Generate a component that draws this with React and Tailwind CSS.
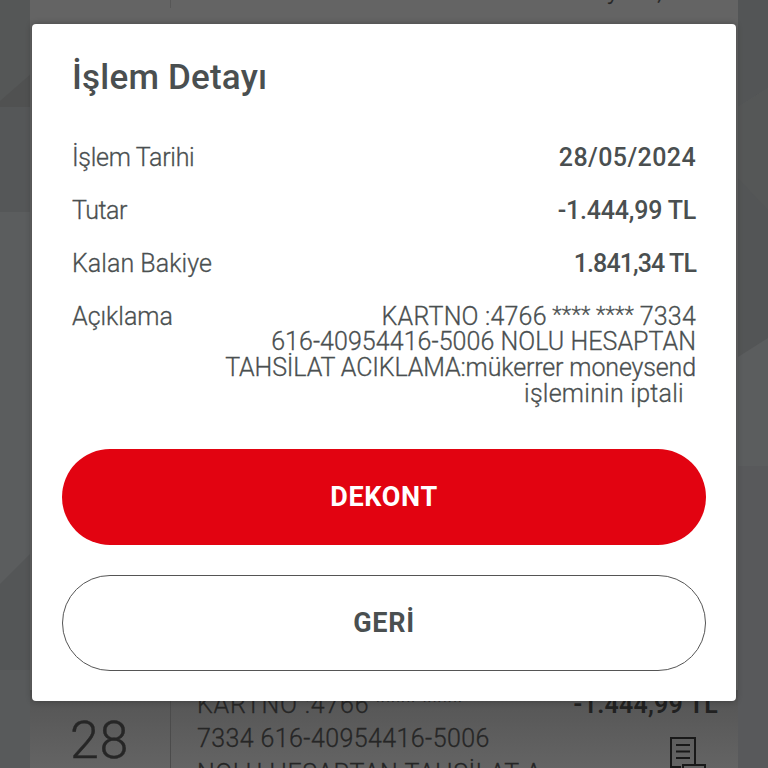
import { clsx } from "clsx";

const details = [
  {
    label: "İşlem Tarihi",
    value: "28/05/2024",
    labelSpacing: "tracking-[-0.3px]",
    valueSpacing: "tracking-[0.4px]",
  },
  {
    label: "Tutar",
    value: "-1.444,99 TL",
    labelSpacing: "tracking-[-0.5px]",
    valueSpacing: "tracking-[-0.2px]",
  },
  {
    label: "Kalan Bakiye",
    value: "1.841,34 TL",
    labelSpacing: "tracking-[0.05px]",
    valueSpacing: "tracking-[-0.9px]",
  },
];

const Backdrop = () => {
  return (
    <svg
      className="absolute inset-0 h-full w-full"
      viewBox="0 0 768 768"
      preserveAspectRatio="none"
      aria-hidden="true"
    >
      <rect width="768" height="768" fill="#5b5d5e" />
      <path d="M0 0H40V107H0Z" fill="#555757" />
      <path d="M0 101L40 66V107H0Z" fill="#505151" />
      <path d="M0 107H40V212H0Z" fill="#555758" />
      <path d="M0 584L40 544V768H0Z" fill="#545657" />
      <path d="M0 670H40V768H0Z" fill="#585a5b" />
      <path d="M730 0H768V88L730 112Z" fill="#535556" />
      <path d="M730 112L768 88V250H730Z" fill="#555757" />
      <path d="M730 170L768 210V338L730 362Z" fill="#535556" />
      <path d="M730 466H768V768H730Z" fill="#58595b" />
    </svg>
  );
};

const ReceiptIcon = () => {
  return (
    <svg
      className="h-[42px] w-[40px]"
      viewBox="0 0 40 42"
      fill="none"
      stroke="#191919"
      strokeWidth="2"
      aria-hidden="true"
    >
      <path d="M13 31H3V2H27V28" />
      <path d="M8 9H22M8 15.500H22M8 22H22" />
      <path d="M15 40V29H37V40" />
    </svg>
  );
};

const Transactions = () => {
  return (
    <div className="relative mx-[30px] flex h-[768px] flex-col justify-between overflow-hidden bg-[#646464] text-[#262626]">
      <div className="flex h-[22px]">
        <div className="h-2 w-[141px] border-r border-[#575757]" />
        <div className="-mt-[23px] ml-[436px] text-[25px] leading-7 font-light tracking-[1.5px] whitespace-nowrap [-webkit-text-stroke:0.3px]">
          yeni,
        </div>
      </div>
      <div className="flex h-[78px] bg-linear-to-b from-[#545454] to-[#646464]">
        <div className="w-[141px] border-r border-[#4b4b4b] pt-[26px] pl-[40px] text-[52px] leading-[50px] font-light tracking-[0.7px] [-webkit-text-stroke:0.4px]">
          28
        </div>
        <div className="w-[375px] pl-[26px] text-[25px] leading-[34px] font-light whitespace-nowrap [-webkit-text-stroke:0.3px]">
          <div className="-mt-[2px] tracking-[0.8px]">
            KARTNO :4766
            <span className="align-[4px] text-[22px] leading-none">
              {" "}
              **** ****
            </span>
          </div>
          <div className="tracking-[0.4px]">7334 616-40954416-5006</div>
          <div className="mt-px tracking-[0.5px]">NOLU HESAPTAN TAHSİLAT A</div>
        </div>
        <div className="flex flex-1 flex-col items-end pr-[20px]">
          <div className="-mt-[2px] text-[25px] leading-[34px] font-semibold tracking-[0.2px] whitespace-nowrap text-[#212121]">
            -1.444,99 TL
          </div>
          <div className="mt-[14px] mr-[10px]">
            <ReceiptIcon />
          </div>
        </div>
      </div>
    </div>
  );
};

const DetailRow = ({ label, value, labelSpacing, valueSpacing }) => {
  return (
    <div className="flex h-[53.400px] items-start justify-between text-[25px] leading-[30px]">
      <dt
        className={clsx("font-light [-webkit-text-stroke:0.3px]", labelSpacing)}
      >
        {label}
      </dt>
      <dd className={clsx("font-medium", valueSpacing)}>{value}</dd>
    </div>
  );
};

const App = () => {
  return (
    <div className="relative h-[768px] w-full overflow-hidden bg-[#5b5d5e] font-['Roboto','Liberation_Sans',sans-serif]">
      <Backdrop />
      <Transactions />
      <div className="absolute inset-0 px-8 pt-[23.500px]">
        <section
          role="dialog"
          aria-labelledby="detail-title"
          className="flex h-[677px] flex-col rounded-[4px] bg-white px-[30px] text-[#4a4f50] shadow-[0_0_6px_rgba(0,0,0,0.3)]"
        >
          <h1
            id="detail-title"
            className="mt-[32px] ml-[10px] text-[35px] leading-[44px] font-medium tracking-[0.2px]"
          >
            İşlem Detayı
          </h1>
          <dl className="mx-[10px] mt-[43px]">
            {details.map((row) => (
              <DetailRow key={row.label} {...row} />
            ))}
            <div className="-mt-px flex items-start justify-between text-[25px] leading-[30px] font-light [-webkit-text-stroke:0.3px]">
              <dt>Açıklama</dt>
              <dd className="mt-[2px] text-right leading-[25.700px] whitespace-nowrap">
                <div className="tracking-[0.2px]">
                  KARTNO :4766
                  <span className="align-[3px] text-[22px] leading-none">
                    {" "}
                    **** ****{" "}
                  </span>
                  7334
                </div>
                <div className="tracking-[0.05px]">
                  616-40954416-5006 NOLU HESAPTAN
                </div>
                <div className="tracking-[-0.13px]">
                  TAHSİLAT ACIKLAMA:mükerrer moneysend
                </div>
                <div className="pr-[12px] tracking-[0.25px]">
                  işleminin iptali
                </div>
              </dd>
            </div>
          </dl>
          <div className="mt-auto mb-[30px] flex flex-col gap-[30px]">
            <button
              type="button"
              className="h-24 rounded-full bg-[#e20311] pt-[2px] text-[27px] font-bold tracking-[0.7px] text-white"
            >
              DEKONT
            </button>
            <button
              type="button"
              className="h-24 rounded-full border border-[#555] bg-white pt-[2px] text-[27px] font-bold tracking-[0.7px]"
            >
              GERİ
            </button>
          </div>
        </section>
      </div>
    </div>
  );
};

export default App;
